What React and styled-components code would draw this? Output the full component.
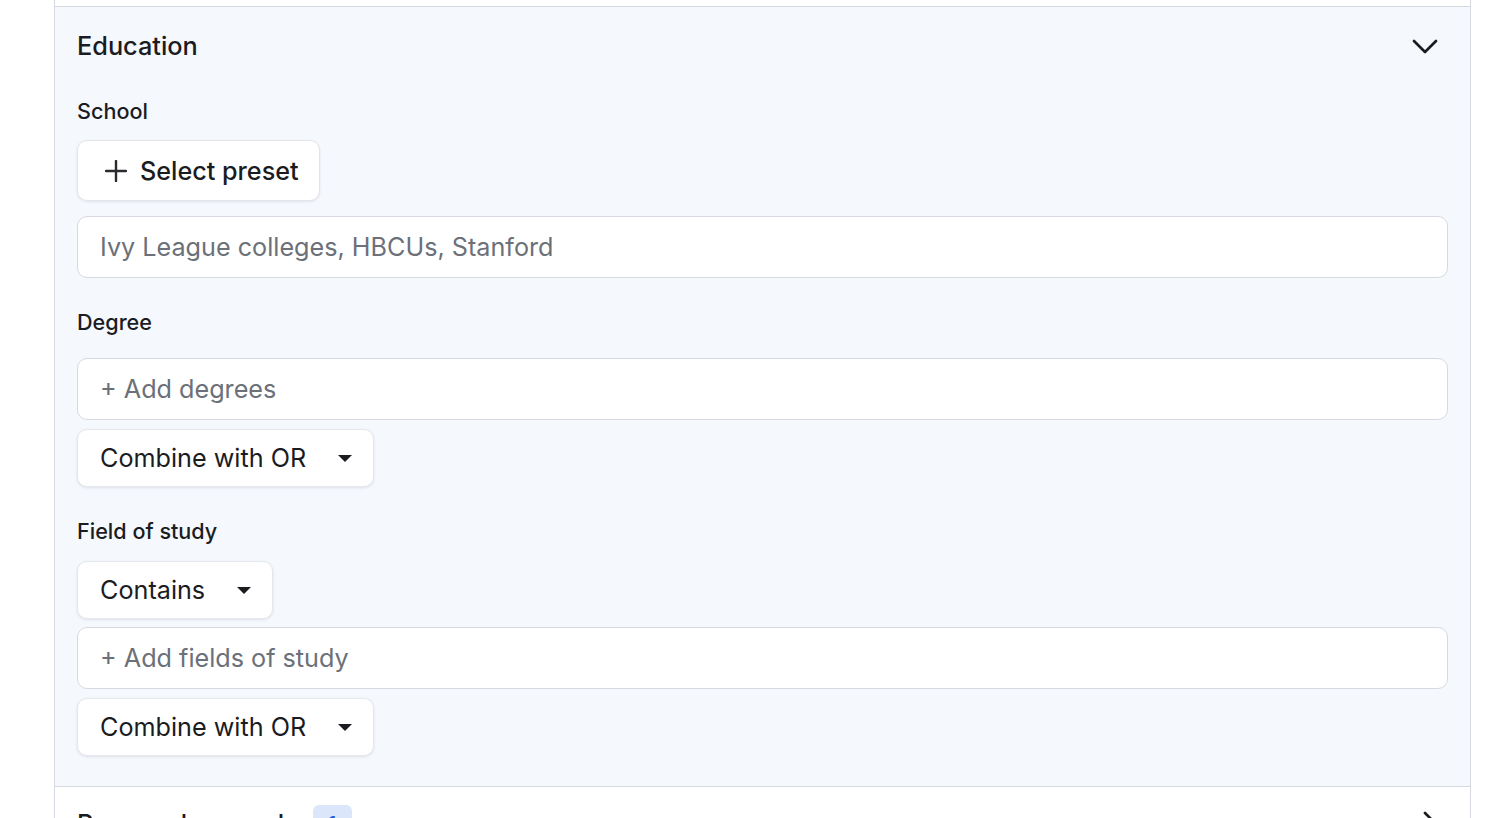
import React from 'react'
import styled, { createGlobalStyle } from 'styled-components'

const GlobalStyle = createGlobalStyle`
  html, body {
    margin: 0;
    padding: 0;
    background: #ffffff;
    font-family: Inter, "Noto Sans", "Liberation Sans", sans-serif;
    color: #1b1c1f;
    overflow: hidden;
  }
  * {
    box-sizing: border-box;
  }
`

function ChevronDown() {
  return (
    <svg width="26" height="16" viewBox="0 0 26 16" fill="none">
      <polyline points="2,3 13,14 24,3" stroke="#1b1c1f" strokeWidth="2.7" strokeLinecap="round" strokeLinejoin="round" />
    </svg>
  )
}

function ChevronRight() {
  return (
    <svg width="16" height="26" viewBox="0 0 16 26" fill="none">
      <polyline points="3,2 14,13 3,24" stroke="#1b1c1f" strokeWidth="2.7" strokeLinecap="round" strokeLinejoin="round" />
    </svg>
  )
}

function PlusIcon() {
  return (
    <svg width="22" height="22" viewBox="0 0 22 22" fill="none">
      <line x1="11" y1="1" x2="11" y2="21" stroke="#2a2b2f" strokeWidth="2.4" strokeLinecap="round" />
      <line x1="1" y1="11" x2="21" y2="11" stroke="#2a2b2f" strokeWidth="2.4" strokeLinecap="round" />
    </svg>
  )
}

function Dropdown({ children }) {
  return (
    <Select>
      <span>{children}</span>
      <Caret />
    </Select>
  )
}

function App() {
  return (
    <>
      <GlobalStyle />
      <Page>
        <Panel>
          <Section $height="8px" />
          <Section $open>
            <SectionHeader>
              <SectionTitle>Education</SectionTitle>
              <ChevronDown />
            </SectionHeader>

            <Field>
              <Label>School</Label>
              <PresetButton>
                <PlusIcon />
                Select preset
              </PresetButton>
              <TextInput $top="15px">Ivy League colleges, HBCUs, Stanford</TextInput>
            </Field>

            <Field>
              <Label $gap="24px">Degree</Label>
              <TextInput>+ Add degrees</TextInput>
              <Dropdown>Combine with OR</Dropdown>
            </Field>

            <Field>
              <Label>Field of study</Label>
              <Dropdown>Contains</Dropdown>
              <TextInput>+ Add fields of study</TextInput>
              <Dropdown>Combine with OR</Dropdown>
            </Field>
          </Section>

          <Section>
            <SectionHeader $height="74px">
              <TitleGroup>
                <SectionTitle>Resume keywords</SectionTitle>
                <Badge>1</Badge>
              </TitleGroup>
              <ChevronRight />
            </SectionHeader>
          </Section>
        </Panel>
      </Page>
    </>
  )
}

export default App

const Page = styled.div`
  width: 1506px;
  height: 818px;
  overflow: hidden;
  padding-left: 54px;
`

const Panel = styled.div`
  width: 1417px;
  border-left: 1px solid #d6dae0;
  border-right: 1px solid #d6dae0;
  margin-top: -1px;
`

const Section = styled.div`
  background: ${p => (p.$open ? '#f5f8fd' : '#ffffff')};
  border-bottom: 1px solid #d6dae0;
  padding: 0 22px ${p => (p.$open ? '30px' : '0')};
  height: ${p => p.$height || 'auto'};
  display: flex;
  flex-direction: column;
`

const SectionHeader = styled.div`
  height: ${p => p.$height || '78px'};
  display: flex;
  align-items: center;
  justify-content: space-between;
  padding-right: 10px;
`

const TitleGroup = styled.div`
  display: flex;
  align-items: center;
  gap: 15px;
`

const SectionTitle = styled.h2`
  margin: 0;
  font-size: 25.3px;
  font-weight: 500;
  line-height: 32px;
  color: #1b1c1f;
`

const Badge = styled.span`
  display: inline-flex;
  align-items: center;
  justify-content: center;
  width: 39px;
  height: 38px;
  border-radius: 6px;
  background: #dce6fb;
  color: #2d5bd6;
  font-size: 20px;
  font-weight: 500;
`

const Field = styled.div`
  display: flex;
  flex-direction: column;
  align-items: flex-start;
  gap: 8px;
  margin-top: 14px;

  & + & {
    margin-top: 32px;
  }
`

const Label = styled.div`
  font-size: 21.6px;
  font-weight: 500;
  line-height: 24px;
  color: #1b1c1f;
  margin-bottom: ${p => (p.$gap ? `calc(${p.$gap} - 8px)` : '9px')};
`

const PresetButton = styled.button`
  display: inline-flex;
  align-items: center;
  gap: 13px;
  height: 61px;
  padding: 0 20px 0 27px;
  background: #ffffff;
  border: 1px solid #e1e4e9;
  border-radius: 10px;
  box-shadow: 0 1px 3px rgba(16, 24, 40, 0.08);
  font-family: inherit;
  font-size: 25.2px;
  font-weight: 500;
  color: #1b1c1f;
`

const TextInput = styled.div`
  width: 100%;
  height: 62px;
  margin-top: ${p => (p.$top ? `calc(${p.$top} - 8px)` : '0')};
  display: flex;
  align-items: center;
  padding: 0 22px;
  background: #ffffff;
  border: 1px solid #d6dae0;
  border-radius: 10px;
  font-size: 25.2px;
  color: #6b7079;
`

const Select = styled.div`
  display: inline-flex;
  align-items: center;
  gap: 32px;
  height: 58px;
  padding: 0 21px 0 22px;
  margin-top: 1px;
  background: #ffffff;
  border: 1px solid #e6e8ec;
  border-radius: 10px;
  box-shadow: 0 1px 3px rgba(16, 24, 40, 0.1);
  font-size: 25.2px;
  color: #1b1c1f;
`

const Caret = styled.span`
  width: 0;
  height: 0;
  border-left: 7px solid transparent;
  border-right: 7px solid transparent;
  border-top: 7px solid #1b1c1f;
`
